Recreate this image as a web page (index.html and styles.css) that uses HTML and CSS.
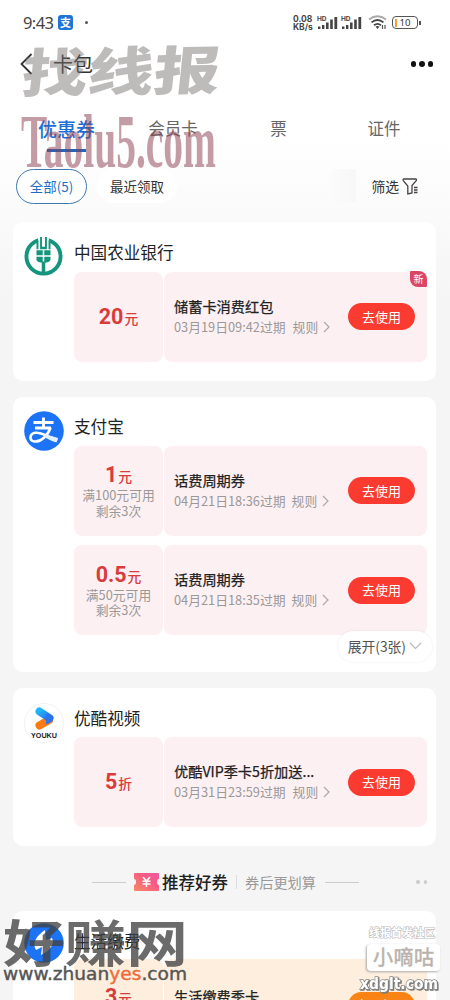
FILE: index.html
```html
<!DOCTYPE html>
<html lang="zh-CN">
<head>
<meta charset="utf-8">
<title>卡包</title>
<link rel="stylesheet" href="styles.css">
</head>
<body>
<svg width="0" height="0" class="defs">
  <defs>
    <linearGradient id="ticket" x1="0" y1="1" x2="1" y2="0"><stop offset="0" stop-color="#f98a65"/><stop offset=".6" stop-color="#f65b84"/><stop offset="1" stop-color="#ee5aa6"/></linearGradient>
    <linearGradient id="yk" x1="0" y1="0" x2="1" y2="1"><stop offset="0" stop-color="#1fb4fb"/><stop offset="1" stop-color="#2b6df0"/></linearGradient>
    <symbol id="signal" viewBox="0 0 21 14"><g fill="#444"><rect x="1" y="10.5" width="2.4" height="2.5"/><rect x="5" y="9" width="2.4" height="4"/><rect x="9" y="6.5" width="2.6" height="6.5"/><rect x="13.2" y="3.5" width="2.6" height="9.5"/><rect x="17.4" y="1" width="2.8" height="12"/></g><text x="0" y="5.3" class="hd">HD</text></symbol>
  </defs>
</svg>
<div class="screen">
  <header class="status">
    <span class="time">9:43</span>
    <span class="badge">支</span>
    <span class="dot"></span>
    <span class="speed">0.08<br>KB/s</span>
    <svg class="sig" width="21" height="14"><use href="#signal"/></svg>
    <svg class="sig" width="21" height="14"><use href="#signal"/></svg>
    <svg class="wifi" width="19" height="15" viewBox="0 0 19 15" fill="none" stroke-width="1.8"><path d="M1 4.5Q9.5-2 18 4.5" stroke="#aaa"/><path d="M3.5 7.4Q9.5 2.7 15.5 7.4" stroke="#444"/><path d="M6 10.2Q9.5 7.5 13 10.2" stroke="#444"/><path d="M7.5 11.5 9.5 14l2-2.500Q9.500 10.500 7.500 11.500Z" fill="#444" stroke="none"/><path d="M14.500 10v4M17 10v4" stroke="#555" stroke-width="1.200"/></svg>
    <span class="battery"><i></i>10</span><span class="cap"></span>
  </header>
  <nav class="navbar">
    <svg width="13" height="22" viewBox="0 0 13 22" fill="none" stroke="#333" stroke-width="1.800"><path d="M11.500 1 1.500 11l10 10"/></svg>
    <h1>卡包</h1>
    <span class="more"><i></i><i class="mid"></i><i></i></span>
  </nav>
  <div class="tabs">
    <div class="tab active">优惠券</div>
    <div class="tab">会员卡</div>
    <div class="tab">票</div>
    <div class="tab">证件</div>
  </div>
  <div class="filters">
    <span class="pill on">全部(5)</span>
    <span class="pill recent">最近领取</span>
    <span class="fade"></span>
    <span class="filter">筛选<svg width="17" height="17" viewBox="0 0 17 17" fill="none" stroke="#444" stroke-width="1.300"><path d="M1.500 1h12.500q.8.800.2 1.600L10 7.500v7.500L5.800 16V8L1.300 2.600Q.700 1.500 1.500 1Z"/><path d="M12 9.500h3.500M12 12h3.500M12 14.500h3.500"/></svg></span>
  </div>

  <main class="list">
    <section class="card one">
      <svg class="logo" viewBox="0 0 40 40"><circle cx="20" cy="20" r="17.500" fill="none" stroke="#15957d" stroke-width="4"/><path d="M14.500 0h11v7h-11z" fill="#fff"/><g fill="#15957d"><path d="M16.500 0h2v10h3V0h2v12.500h-7z"/><path d="M12.800 3.500h2v9h-2zM25.200 3.500h2v9h-2zM12.800 13.500h6.400v5.200h-6.400zM20.800 13.500h6.400v5.200h-6.400zM12.800 20.200h6.400v6.200q-5.400 0-6.400-3zM20.800 20.200h6.400v3.200q-1 3-6.400 3zM18.200 25h3.600v12h-3.600z"/></g></svg>
      <div class="body">
        <h2>中国农业银行</h2>
        <article class="coupon">
          <div class="value"><p><b>20</b>元</p></div>
          <div class="info"><div class="text"><h3>储蓄卡消费红包</h3><p>03月19日09:42过期<span>规则</span><svg width="7" height="12" viewBox="0 0 7 12"><path d="m1 1 5 5-5 5"/></svg></p></div><button>去使用</button></div>
          <em class="new">新</em>
        </article>
      </div>
    </section>

    <section class="card two">
      <svg class="logo" viewBox="0 0 40 40"><circle cx="20" cy="20" r="19.800" fill="#1c73f5"/><g fill="none" stroke="#fff" stroke-width="2.800"><path d="M9.500 11.500h20M19.500 6.500v10M11 17h16"/><path d="M26.500 16.500C24 24.500 17 31 10.500 30.500 4.500 29.500 5.500 22.500 11.500 21.800 18 21 25 27 33.500 28.500" stroke-width="2.600"/></g><path d="m22 23.500 12 3.500-1.500 4.500Q27 30 21 26.500Z" fill="#e5f0ff"/></svg>
      <div class="body">
        <h2>支付宝</h2>
        <article class="coupon">
          <div class="value"><p><b>1</b>元</p><small>满100元可用</small><small>剩余3次</small></div>
          <div class="info"><div class="text"><h3>话费周期券</h3><p>04月21日18:36过期<span>规则</span><svg width="7" height="12" viewBox="0 0 7 12"><path d="m1 1 5 5-5 5"/></svg></p></div><button>去使用</button></div>
        </article>
        <article class="coupon">
          <div class="value"><p><b>0.5</b>元</p><small>满50元可用</small><small>剩余3次</small></div>
          <div class="info"><div class="text"><h3>话费周期券</h3><p>04月21日18:35过期<span>规则</span><svg width="7" height="12" viewBox="0 0 7 12"><path d="m1 1 5 5-5 5"/></svg></p></div><button>去使用</button></div>
        </article>
      </div>
      <div class="expand">展开(3张)<svg width="13" height="8" viewBox="0 0 13 8" fill="none" stroke="#bbb" stroke-width="1.200"><path d="m1 1 5.500 5.500L12 1"/></svg></div>
    </section>

    <section class="card three">
      <svg class="logo" viewBox="0 0 40 40"><circle cx="20" cy="20" r="19.500" fill="#fff" stroke="#f0f0f0"/><path d="m15.500 22.500 9.500-5.500" stroke="#fa7a14" stroke-width="8" stroke-linecap="round"/><path d="m15.500 8.500 10 6.500" stroke="url(#yk)" stroke-width="8" stroke-linecap="round"/><path d="M22 10.500l6 2.500q2.500 3-1 6l-5 2.500Z" fill="#2b74f0"/><text x="20" y="34.500" text-anchor="middle" textLength="26" lengthAdjust="spacingAndGlyphs" class="youku">YOUKU</text></svg>
      <div class="body">
        <h2>优酷视频</h2>
        <article class="coupon">
          <div class="value"><p><b>5</b>折</p></div>
          <div class="info"><div class="text"><h3>优酷VIP季卡5折加送...</h3><p>03月31日23:59过期<span>规则</span><svg width="7" height="12" viewBox="0 0 7 12"><path d="m1 1 5 5-5 5"/></svg></p></div><button>去使用</button></div>
        </article>
      </div>
    </section>

    <div class="divider">
      <i class="line"></i>
      <svg width="25" height="18" viewBox="0 0 25 18"><path d="M1 0h23q1 0 1 1v5q-2 0-2 3t2 3v5q0 1-1 1H1q-1 0-1-1v-5q2 0 2-3T0 6V1q0-1 1-1Z" fill="url(#ticket)"/><path d="m9 4 3.500 4L16 4M8.500 8.300h8M8.500 11h8M12.500 8v6" fill="none" stroke="#fff" stroke-width="1.500"/></svg>
      <strong>推荐好券</strong><i class="bar"></i><span>券后更划算</span>
      <i class="line"></i>
      <span class="dots"><i></i><i></i></span>
    </div>

    <section class="card four">
      <svg class="logo" viewBox="0 0 40 40"><circle cx="20" cy="20" r="19.800" fill="#1c73f5"/><path d="M21 7C12 13 8 20 12 27l6-3-1 8c9-4 14-11 11-17l-6 2Z" fill="#fff"/></svg>
      <div class="body">
        <h2>生活缴费</h2>
        <article class="coupon peach">
          <div class="value"><p><b>3</b>元</p></div>
          <div class="info"><div class="text"><h3>生活缴费季卡</h3></div><button>立即领取</button></div>
        </article>
      </div>
    </section>
  </main>

  <svg class="marks" width="450" height="1000" viewBox="0 0 450 1000">
    <text class="brush" transform="translate(20 92.500) skewX(-6) skewY(-1) scale(1 .9)" textLength="198" lengthAdjust="spacingAndGlyphs">找线报</text>
    <text class="taolu" x="21" y="167" textLength="195" lengthAdjust="spacingAndGlyphs">Taolu5.com</text>
    <text class="zhuan" x="3" y="962" textLength="185" lengthAdjust="spacingAndGlyphs">好赚网</text>
    <text class="url" x="3" y="980" textLength="184" lengthAdjust="spacingAndGlyphs">www.zhuan<tspan>yes</tspan>.com</text>
    <text class="slogan" x="369" y="937" textLength="66">线报首发社区</text>
    <rect class="tag" x="367" y="944" width="73" height="27" rx="4"/>
    <text class="digu" x="373" y="965" textLength="61">小嘀咕</text>
    <text class="xd" x="360" y="989" textLength="78" lengthAdjust="spacingAndGlyphs">xdglt.com</text>
  </svg>
</div>
</body>
</html>
```

FILE: styles.css
```css
* { box-sizing: border-box; margin: 0; padding: 0; }
body { font-family: "Noto Sans CJK SC", sans-serif; color: #333; overflow: hidden; }
i, em { font-style: normal; }
.defs { position: absolute; }
.screen { position: relative; width: 450px; height: 1000px; overflow: hidden; background: linear-gradient(#fff 0, #fff 135px, #f5f5f5 300px); }

.status { display: flex; align-items: center; height: 45px; padding-left: 23px; }
.time { width: 35px; font: 16.500px/20px "Noto Sans", sans-serif; letter-spacing: -.6px; color: #444; }
.badge { width: 15px; height: 15px; border-radius: 3px; background: #1f74d6; color: #fff; font-size: 11px; font-weight: 700; line-height: 14px; text-align: center; }
.dot { width: 3px; height: 3px; margin-left: 12px; border-radius: 50%; background: #555; }
.speed { width: 22px; margin-left: 205px; padding-top: 1px; font: 700 8.500px/8px Inter, sans-serif; color: #444; white-space: nowrap; }
.sig { margin-left: 2px; margin-right: 1px; overflow: visible; flex: none; }
.hd { font: 700 6.500px Inter, sans-serif; fill: #444; }
.wifi { margin-left: 5px; }
.battery { display: flex; align-items: center; gap: 3px; width: 26px; height: 13px; margin-left: 5px; padding-left: 2px; border: 1.500px solid #555; border-radius: 4px; font: 9.500px/10px "Noto Sans", sans-serif; }
.battery i { width: 1.500px; height: 8px; background: #eaa13c; }
.cap { width: 2px; height: 4px; margin-left: 1px; background: #555; }

.navbar { display: flex; align-items: center; height: 38px; padding: 0 17px 0 20px; }
h1 { margin-left: 20px; font-size: 20px; line-height: 28px; font-weight: 400; }
.more { display: flex; align-items: center; gap: 2.500px; margin-left: auto; }
.more i { width: 5.300px; height: 5.300px; border-radius: 50%; background: #111; }
.more .mid { width: 6.500px; height: 6.500px; }

.tabs { display: grid; grid-template-columns: 107px 106px 105px 106px; padding-left: 13px; height: 78px; padding-top: 31px; }
.tab { height: 38px; margin-top: -1px; font-size: 16.500px; line-height: 31px; text-align: center; color: #666; }
.tab.active { font-size: 19px; font-weight: 500; color: #1b70d8; }
.tab.active::after { content: ""; display: block; width: 39px; height: 2.500px; margin: 5px auto 0; background: #1f67bd; }

.filters { display: flex; align-items: center; height: 50px; padding: 0 31px 0 16px; }
.pill { padding: 0 23px; font-size: 13.500px; line-height: 34px; }
.recent { padding: 0 13px; margin-left: 10px; border-radius: 17px; background: #fff; }
.pill.on { width: 71px; height: 35px; padding: 0; border: 1px solid #3f78ad; border-radius: 18px; background: #fff; color: #1e6fc4; text-align: center; line-height: 33px; }
.fade { width: 25px; height: 34px; margin-left: auto; background: linear-gradient(90deg, #fbfbfb, #f7f7f7); }
.filter { display: flex; align-items: center; gap: 3px; margin-left: 15px; font-size: 13.800px; line-height: 20px; }

.list { padding: 11px 14px 0 13px; }
.card { position: relative; display: flex; align-items: flex-start; margin-bottom: 16px; padding: 15px 9px 0 11px; border-radius: 10px; background: #fff; }
.one { height: 158.500px; }
.two { height: 275px; padding-top: 14px; }
.three { height: 158px; margin-bottom: 0; }
.four { height: 110px; padding-top: 12px; }
.logo { flex: none; width: 40px; height: 40px; }
.one .logo { width: 39px; height: 39px; margin-right: 1px; }
.body { flex: 1; margin-left: 10px; }
h2 { height: 34.500px; font-size: 16.600px; line-height: 30px; font-weight: 400; color: #222; }
.two h2 { height: 35px; }
.four h2 { height: 36px; line-height: 36px; }
.coupon { position: relative; display: flex; gap: 1px; height: 90px; margin-bottom: 9.500px; }
.value, .info { border-radius: 8px; background: #fdf0f2; }
.value { display: flex; flex-direction: column; justify-content: center; width: 89px; flex: none; text-align: center; }
.value p { height: 24px; font-size: 13.800px; line-height: 24px; font-weight: 500; color: #d93c3c; }
.value b { margin-right: 1px; font: 700 21.500px/24px Roboto, sans-serif; }
.value small { height: 15.500px; font-size: 12.800px; line-height: 15.500px; color: #999; }
.two .value { padding-top: 0; }
.info { display: flex; flex: 1; align-items: center; justify-content: space-between; padding: 0 12px 0 10px; }
h3 { font-size: 14.200px; line-height: 21px; font-weight: 400; color: #222; white-space: nowrap; -webkit-text-stroke: .25px #222; }
.text { margin-top: -1px; }
.text p { display: flex; align-items: center; font-size: 12.800px; line-height: 20px; color: #999; white-space: nowrap; }
.text p span { margin: 0 5px 0 7px; }
.two .text p span { margin-left: 6px; }
.text p svg { fill: none; stroke: #aaa; stroke-width: 1.200; }
button { flex: none; width: 67px; height: 27px; border: 0; border-radius: 14px; background: #fb3b30; color: #fff; font: 13px/26px "Noto Sans CJK SC", sans-serif; }
.new { position: absolute; top: -1px; right: 0; width: 17px; height: 16px; border-radius: 1px 8px 1px 8px; background: #d94666; color: #fff; font-size: 10px; line-height: 16px; text-align: center; }
.expand { position: absolute; right: 4px; bottom: 10px; display: flex; align-items: center; gap: 3px; height: 31px; padding: 0 10px; border-radius: 16px; background: #fff; box-shadow: 0 0 3px rgba(0, 0, 0, .08); font-size: 13.800px; line-height: 29px; color: #555; }

.divider { position: relative; display: flex; align-items: center; height: 65px; padding: 8px 0 0 79px; }
.divider .line { width: 34px; height: 1px; background: #ccc; }
.divider svg { margin-left: 8px; }
.divider strong { margin-left: 3px; font-size: 16.500px; font-weight: 500; color: #222; }
.divider .bar { width: 1px; height: 14px; margin: 0 8px; background: #ddd; }
.divider span { margin-right: 9px; font-size: 14.200px; color: #999; }
.divider .dots { display: flex; gap: 4px; margin: 0 9px 0 auto; }
.dots i { width: 3.500px; height: 3.500px; border-radius: 50%; background: #ccc; }

.peach .value, .peach .info { background: #feeedd; }
.peach .value { justify-content: flex-start; padding-top: 26px; }
.peach .info { align-items: flex-start; padding-top: 28px; }
.peach button { margin-top: 5px; background: #f98313; }

.marks { position: absolute; left: 0; top: 0; pointer-events: none; }
.brush { font: 900 58px "Noto Sans CJK SC", sans-serif; fill: rgba(120, 112, 112, .48); }
.taolu { font: 700 76px "Liberation Serif", serif; fill: rgba(140, 65, 85, .52); }
.zhuan { font: 700 50px "Noto Sans CJK SC", sans-serif; fill: rgba(65, 65, 65, .78); }
.url { font: 17px "DejaVu Sans", sans-serif; fill: #555; stroke: #555; stroke-width: .4px; }
.url tspan { fill: #ef6a38; stroke: #ef6a38; }
.slogan { font: 700 11px "Noto Sans CJK SC", sans-serif; fill: #fff; stroke: #bbb; stroke-width: 1.200px; paint-order: stroke; }
.tag { fill: #fff; filter: drop-shadow(-1px 1px 1px #aaa); }
.digu { font: 400 20px "Noto Sans CJK SC", sans-serif; fill: #b9b1ac; stroke: #b9b1ac; stroke-width: .5px; }
.xd { font: 700 16px "DejaVu Sans", sans-serif; fill: #fff; stroke: #888; stroke-width: 1.500px; paint-order: stroke; filter: drop-shadow(1px 1px 0 #777); }
.youku { font: 700 7px "Liberation Sans", sans-serif; fill: #222; }
```
